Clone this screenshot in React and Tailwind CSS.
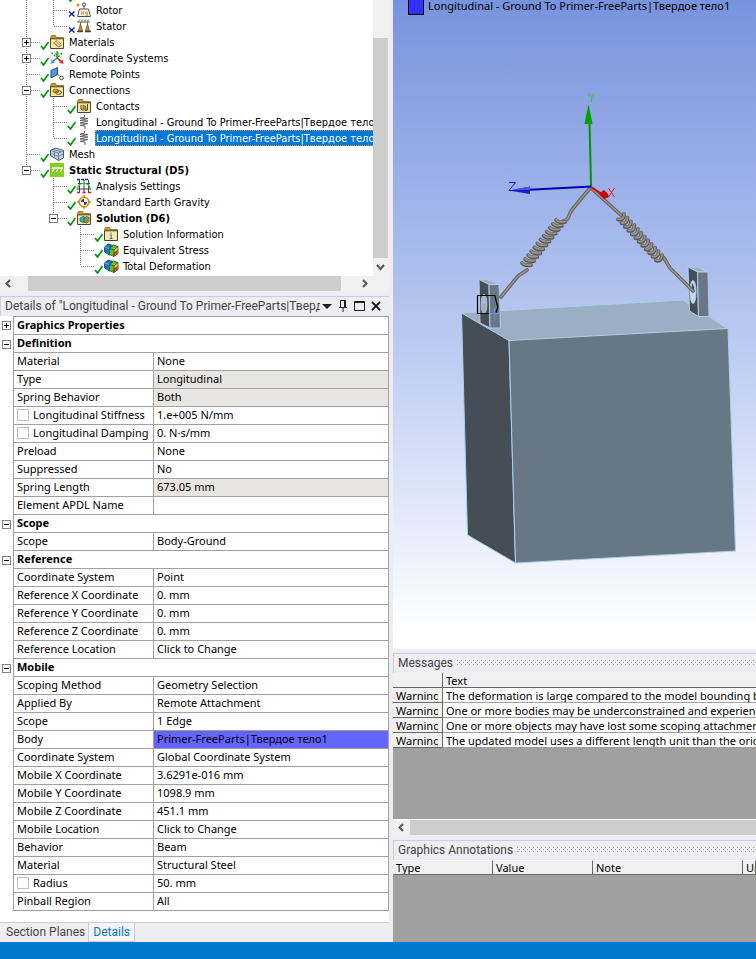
import { useState } from "react";
import clsx from "clsx";

const SPRING = "Longitudinal - Ground To Primer-FreeParts|Твердое тело";

// guides: one entry per indent level
const TREE = [
    { guides: ["pass", "pass"], label: "", icon: null, mark: "check" },
    { guides: ["pass", "tee"], label: "Rotor", icon: "mass", mark: "cross" },
    { guides: ["pass", "end"], label: "Stator", icon: "support", mark: "cross" },
    { guides: ["plus"], label: "Materials", icon: "materials", mark: "check" },
    { guides: ["plus"], label: "Coordinate Systems", icon: "axes", mark: "check" },
    { guides: ["tee"], label: "Remote Points", icon: "remote", mark: "check" },
    { guides: ["minus"], label: "Connections", icon: "connections", mark: "check" },
    { guides: ["pass", "tee"], label: "Contacts", icon: "contacts", mark: "check" },
    { guides: ["pass", "tee"], label: SPRING, icon: "spring", mark: "check" },
    { guides: ["pass", "end"], label: SPRING, icon: "spring", mark: "check", selected: true },
    { guides: ["tee"], label: "Mesh", icon: "mesh", mark: "check" },
    { guides: ["minusEnd"], label: "Static Structural (D5)", icon: "static", mark: "check", bold: true },
    { guides: ["none", "tee"], label: "Analysis Settings", icon: "settings", mark: "check" },
    { guides: ["none", "tee"], label: "Standard Earth Gravity", icon: "gravity", mark: "check" },
    { guides: ["none", "minusEnd"], label: "Solution (D6)", icon: "solution", mark: "check", bold: true },
    { guides: ["none", "none", "tee"], label: "Solution Information", icon: "info", mark: "check" },
    { guides: ["none", "none", "tee"], label: "Equivalent Stress", icon: "result", mark: "check" },
    { guides: ["none", "none", "end"], label: "Total Deformation", icon: "result", mark: "check" },
];

const DETAILS = [
    { title: "Graphics Properties", closed: true, rows: [] },
    {
        title: "Definition",
        rows: [
            { name: "Material", value: "None" },
            { name: "Type", value: "Longitudinal", readOnly: true },
            { name: "Spring Behavior", value: "Both", readOnly: true },
            { name: "Longitudinal Stiffness", value: "1.e+005 N/mm", check: true },
            { name: "Longitudinal Damping", value: "0. N·s/mm", check: true },
            { name: "Preload", value: "None" },
            { name: "Suppressed", value: "No" },
            { name: "Spring Length", value: "673.05 mm", readOnly: true },
            { name: "Element APDL Name", value: "" },
        ],
    },
    { title: "Scope", rows: [{ name: "Scope", value: "Body-Ground" }] },
    {
        title: "Reference",
        rows: [
            { name: "Coordinate System", value: "Point" },
            { name: "Reference X Coordinate", value: "0. mm" },
            { name: "Reference Y Coordinate", value: "0. mm" },
            { name: "Reference Z Coordinate", value: "0. mm" },
            { name: "Reference Location", value: "Click to Change" },
        ],
    },
    {
        title: "Mobile",
        rows: [
            { name: "Scoping Method", value: "Geometry Selection" },
            { name: "Applied By", value: "Remote Attachment" },
            { name: "Scope", value: "1 Edge" },
            { name: "Body", value: "Primer-FreeParts|Твердое тело1", active: true },
            { name: "Coordinate System", value: "Global Coordinate System" },
            { name: "Mobile X Coordinate", value: "3.6291e-016 mm" },
            { name: "Mobile Y Coordinate", value: "1098.9 mm" },
            { name: "Mobile Z Coordinate", value: "451.1 mm" },
            { name: "Mobile Location", value: "Click to Change" },
            { name: "Behavior", value: "Beam" },
            { name: "Material", value: "Structural Steel" },
            { name: "Radius", value: "50. mm", check: true },
            { name: "Pinball Region", value: "All" },
        ],
    },
];

const MESSAGES = [
    "The deformation is large compared to the model bounding box.",
    "One or more bodies may be underconstrained and experiencing rigid body motion.",
    "One or more objects may have lost some scoping attachments during the update.",
    "The updated model uses a different length unit than the original.",
];

const uiFont = "font-[Roboto,sans-serif] text-[12px]";
const gridFont = "font-['Noto_Sans',sans-serif] text-[11px]";

function Folder({ children }) {
    return (
        <>
            <path d="M1.5 3.5 2.5 1.5h4l1 2h7v2h-13z" fill="#c99a1e" stroke="#7a5c14" strokeWidth="0.7" />
            <path d="M1.5 4.8h13v9.7h-13z" fill="#f8eaa4" stroke="#4d4530" />
            {children}
        </>
    );
}

function TreeIcon({ name }) {
    return (
        <svg viewBox="0 0 16 16" className="h-4 w-4 shrink-0" aria-hidden="true">
            {name === "mass" && (
                <>
                    <circle cx="2" cy="3" r="1.6" fill="#dc9a12" />
                    <circle cx="8" cy="2.6" r="1.6" fill="none" stroke="#444" />
                    <path d="M8 4v3M3.5 7h9l2 7.5h-13z" fill="#f4f4f2" stroke="#555" />
                    <path d="M5.5 12.5v-3.5M5.5 11h2v1.5M7.5 9v2M9.5 10h2v3.5h-2M9.5 10v2h2" fill="none" stroke="#e0a01c" strokeWidth="0.9" />
                </>
            )}
            {name === "support" && (
                <>
                    <path d="M2 3.5 4 1.5M5 3.5 7 1.5M8 3.5l2-2M11 3.5l2-2M1 4h13" stroke="#444" strokeWidth="0.9" />
                    <path d="M4.5 4v2.5M11.5 4v2.5M4.5 6 6.5 13h-4zM11.5 6l2 7h-4z" fill="#c88d1c" stroke="#6d5320" strokeWidth="0.8" />
                    <path d="M1 13.5h6M9 13.5h6" stroke="#444" strokeWidth="1.5" />
                </>
            )}
            {name === "materials" && (
                <Folder>
                    <path d="M4.5 9 8 6.5l4 3.5v2l-2.5 1z" fill="#e8b76c" stroke="#8f6937" strokeWidth="0.7" />
                    <path d="m6 8 4 4M8 7l3.5 3.5" stroke="#fbe2b0" strokeWidth="0.8" />
                </Folder>
            )}
            {name === "axes" && (
                <>
                    <path d="M2.5 2.5 13 13M13 3 3 13" stroke="#555" strokeWidth="1.2" strokeDasharray="2 1.5" />
                    <path d="M8 8V4" stroke="#18c526" strokeWidth="2" />
                    <path d="m5.5 4.5 2.5-4 2.5 4z" fill="#18d82a" />
                    <path d="m8 8-4 3" stroke="#3a8ade" strokeWidth="1.5" />
                    <path d="m1.5 14 1-4.5L6 12.5z" fill="#4f9cf0" />
                    <path d="m8 8 4 3" stroke="#d82222" strokeWidth="1.5" />
                    <path d="m14.5 14-1-4.5-3.5 3z" fill="#ee2222" />
                </>
            )}
            {name === "remote" && (
                <>
                    <path d="M2 4.5 8.5 1.5v7L2 12z" fill="#5b93dc" stroke="#234f91" />
                    <path d="m7 7 5 4" stroke="#666" strokeDasharray="1.5 1" />
                    <circle cx="12.5" cy="12" r="1.8" fill="#fff" stroke="#444" />
                </>
            )}
            {name === "connections" && (
                <Folder>
                    <ellipse cx="6.8" cy="9" rx="3" ry="1.8" fill="#d8a53c" stroke="#75551e" strokeWidth="0.8" />
                    <ellipse cx="9.5" cy="10.5" rx="3" ry="1.8" fill="none" stroke="#75551e" />
                </Folder>
            )}
            {name === "contacts" && (
                <Folder>
                    <path d="M5 7v4l2.5 1.5M11.5 6v6l-2.5.5" fill="none" stroke="#444" />
                    <path d="m7 7 3 1.5v4L7 11z" fill="#d6921c" stroke="#60450f" strokeWidth="0.7" />
                </Folder>
            )}
            {name === "spring" && (
                <path
                    d="M8.5 1v2L4 4.2l8 .3-8 2 8 .5-8 2 8 .5-8 2 5 .5V15"
                    fill="none"
                    stroke="#555"
                    strokeWidth="0.9"
                />
            )}
            {name === "mesh" && (
                <>
                    <path d="m1.5 4.5 5-2.5 8 2.5V12l-5 2.5-8-5z" fill="#c4d2e4" stroke="#4b5d78" />
                    <path d="m1.5 4.5 8 2.5v7.5M9.5 7l5-2.5M4 3.3 12 5.8M5.5 5.7v6.3M1.5 7l8 3.5 5-3" fill="none" stroke="#5f718b" strokeWidth="0.8" />
                </>
            )}
            {name === "static" && (
                <>
                    <rect x="1" y="1" width="14" height="14" fill="#85cf1d" />
                    <path d="M3 6h11M5 6 3.5 10M9 6l-1.5 4M13 6l-1.5 4" stroke="#fff" strokeWidth="1.3" />
                </>
            )}
            {name === "settings" && (
                <>
                    <path d="M3.5 2v12M8 2v12M12.5 2v12M2 5.5h12M2 11h12" stroke="#444" />
                    <path d="M1 12C3 5 5 5.5 8 5.5S13 6 15 12" fill="none" stroke="#22c832" strokeWidth="1.2" />
                    <path d="M1 1.5h3M5 1.5h3M9 1.5h3" stroke="#2020e8" strokeWidth="1.5" />
                    <path d="M1 14.5h3M6.5 14.5h3M12 14.5h3" stroke="#e01818" strokeWidth="1.5" />
                </>
            )}
            {name === "gravity" && (
                <>
                    <circle cx="8" cy="8" r="4.8" fill="#eee" stroke="#c8921e" strokeWidth="1.6" />
                    <path d="M8 8V5a3 3 0 0 0-3 3zM8 8h3a3 3 0 0 1-3 3z" fill="#3a3a3a" />
                    <path d="m8 .5 1.5 2.5h-3zM8 15.5 6.5 13h3zM.5 8 3 6.5v3zM15.5 8 13 9.5v-3z" fill="#c8921e" />
                </>
            )}
            {name === "solution" && (
                <Folder>
                    <path d="m4 8 3-1.5 2.5 1v4l-3 1L4 11z" fill="#2cacd8" stroke="#25525e" strokeWidth="0.7" />
                    <path d="m8 8 2.5-1.5 2.5 1v4l-2.5 1.5L8 12z" fill="#42c23e" stroke="#335" strokeWidth="0.7" />
                    <path d="m10.5 9 2.5-1v3.5L10.5 13z" fill="#ec6024" />
                </Folder>
            )}
            {name === "info" && (
                <Folder>
                    <path d="M8 6.5v1.2M6.8 9h1.4v3.5M6.5 12.5h3" fill="none" stroke="#2e8aa8" strokeWidth="1.2" />
                </Folder>
            )}
            {name === "result" && (
                <>
                    <path d="m1.5 5 3.5-3 5 1.5v7L6.5 13l-5-3z" fill="#1d6ed2" stroke="#173a5c" strokeWidth="0.8" />
                    <path d="m1.5 5 5 1.5v6.5" fill="none" stroke="#26d0de" strokeWidth="1.2" />
                    <path d="M6.5 6.5 10.5 3l4.5 1.5v7L11 14.5l-4.5-2z" fill="#44cf38" stroke="#33401b" strokeWidth="0.8" />
                    <path d="m10.5 7.5 4-2.5v3l-4 2.5z" fill="#f5dc22" />
                    <path d="m10.5 10.5 4-2.5v3.5l-4 2.5z" fill="#ee3d18" />
                    <path d="M6.5 6.5 11 8v6.5M11 8l4-3.5" fill="none" stroke="#33401b" strokeWidth="0.8" />
                </>
            )}
        </svg>
    );
}

function Guide({ kind }) {
    const box = kind.startsWith("plus") || kind.startsWith("minus");
    const stops = kind === "end" || kind === "minusEnd";
    return (
        <svg viewBox="0 0 27 16" className="h-4 w-[27px] shrink-0" shapeRendering="crispEdges" aria-hidden="true">
            {kind !== "none" && (
                <path d={stops ? "M13.5 0V8" : "M13.5 0V16"} stroke="#808080" strokeDasharray="1 1" />
            )}
            {kind !== "none" && kind !== "pass" && (
                <path d="M14 8.5H27" stroke="#808080" strokeDasharray="1 1" />
            )}
            {box && (
                <>
                    <rect x="9.5" y="4.5" width="8" height="8" fill="#fff" stroke="#808080" />
                    <path d={kind === "plus" ? "M11 8.5h5M13.5 6v5" : "M11 8.5h5"} stroke="#000" />
                </>
            )}
        </svg>
    );
}

function Mark({ kind }) {
    return (
        <svg viewBox="0 0 9 16" className="h-4 w-[9px] shrink-0" aria-hidden="true">
            {kind === "check" ? (
                <path d="m1 12 2.5 3L8.5 8" fill="none" stroke="#0a9a12" strokeWidth="1.8" />
            ) : (
                <path d="m2 9.5 5.5 5M7.5 9.5l-5.5 5" stroke="#10208a" strokeWidth="1.5" />
            )}
        </svg>
    );
}

function Tree() {
    return (
        <div className="flex h-[292px] shrink-0 flex-col bg-[#f0f0f0]">
            <div className="flex min-h-0 flex-1">
                <div className="min-w-0 flex-1 overflow-hidden bg-white">
                    <ul className="-mt-3.5 pl-[13px] font-['DejaVu_Sans_Condensed','Noto_Sans',sans-serif] text-[11px] leading-[15px]">
                        {TREE.map((item, idx) => (
                            <li key={idx} className="flex h-4 whitespace-nowrap">
                                {item.guides.map((kind, level) => (
                                    <Guide key={level} kind={kind} />
                                ))}
                                <Mark kind={item.mark} />
                                <TreeIcon name={item.icon} />
                                <span
                                    className={clsx(
                                        "ml-[3px] px-px pt-px",
                                        item.bold && "font-bold",
                                        item.selected
                                            ? "bg-[#0078d7] text-white outline-1 -outline-offset-1 outline-dotted outline-[#e08a30]"
                                            : "text-black"
                                    )}
                                >
                                    {item.label}
                                </span>
                            </li>
                        ))}
                    </ul>
                </div>
                <div className="flex w-4 flex-col items-center pt-[38px] pr-px">
                    <div className="w-full flex-1 bg-[#cdcdcd]" />
                    <svg viewBox="0 0 15 18" className="h-[18px] w-[15px]">
                        <path d="m4 7 3.5 4L11 7" fill="none" stroke="#555" strokeWidth="2" />
                    </svg>
                </div>
            </div>
            <div className="mb-px flex h-[15px] items-center pr-[9px]">
                <svg viewBox="0 0 28 15" className="h-full w-7">
                    <path d="M10 4 6.5 7.5 10 11" fill="none" stroke="#555" strokeWidth="2" />
                </svg>
                <div className="h-full flex-1 bg-[#cdcdcd]" />
                <svg viewBox="0 0 39 15" className="h-full w-[39px]">
                    <path d="m22 4 3.5 3.5L22 11" fill="none" stroke="#555" strokeWidth="2" />
                </svg>
            </div>
        </div>
    );
}

function Expander({ label, closed, onClick }) {
    return (
        <button type="button" onClick={onClick} aria-label={`Toggle ${label}`} className="ml-0.5 block h-[9px] w-[9px]">
            <svg viewBox="0 0 9 9" className="h-full w-full" shapeRendering="crispEdges">
                <rect x="0.5" y="0.5" width="8" height="8" fill="#fff" stroke="#808080" />
                <path d={closed ? "M2 4.5h5M4.5 2v5" : "M2 4.5h5"} stroke="#000" />
            </svg>
        </button>
    );
}

function Details() {
    const [toggled, setToggled] = useState({});
    const line = "border-[#a0a0a0]";

    return (
        <section className="flex min-h-0 flex-1 flex-col bg-white">
            <header className={clsx(uiFont, "flex h-6 shrink-0 items-end bg-[#eeeef2] text-[#444]")}>
                <div className="flex h-5 w-full items-center border-t border-l border-[#ccccdf] pb-0.5 pl-1">
                    <h2 className="min-w-0 flex-1 overflow-hidden whitespace-nowrap">
                        Details of "{SPRING}"
                    </h2>
                    <div className="flex w-[69px] items-center justify-between pr-2 pl-0.5 text-[#1e1e1e]">
                        <button type="button" aria-label="Panel menu">
                            <svg viewBox="0 0 10 12" className="h-3 w-2.5"><path d="M0 4h10L5 9z" fill="currentColor" /></svg>
                        </button>
                        <button type="button" aria-label="Pin">
                            <svg viewBox="0 0 10 12" className="h-3 w-2.5" fill="none" stroke="currentColor">
                                <path d="M2.5 7V.5h5V7M1 7.5h8M5 8v4M6.5 1v6" />
                            </svg>
                        </button>
                        <button type="button" aria-label="Maximize">
                            <svg viewBox="0 0 11 12" className="h-3 w-[11px]" fill="none" stroke="currentColor">
                                <path d="M.5 1.5h10v9H.5zM.5 2.5h10" />
                            </svg>
                        </button>
                        <button type="button" aria-label="Close">
                            <svg viewBox="0 0 10 12" className="h-3 w-2.5"><path d="m1 2 8 8M9 2l-8 8" stroke="currentColor" strokeWidth="1.8" /></svg>
                        </button>
                    </div>
                </div>
            </header>
            <div className="min-h-0 flex-1 overflow-hidden">
                <table className={clsx(gridFont, "w-full table-fixed border-separate border-spacing-0 text-left leading-[15px] text-black")}>
                    <colgroup>
                        <col className="w-[13px]" />
                        <col className="w-[140px]" />
                        <col />
                    </colgroup>
                    {DETAILS.map((group, idx) => {
                        const closed = Boolean(group.closed) !== Boolean(toggled[group.title]);
                        return (
                            <tbody key={group.title}>
                                <tr>
                                    <td className="p-0 align-middle">
                                        <Expander
                                            label={group.title}
                                            closed={closed}
                                            onClick={() => setToggled({ ...toggled, [group.title]: !toggled[group.title] })}
                                        />
                                    </td>
                                    <th colSpan={2} className={clsx("border-x border-b pt-0 pb-0.5 pl-[3px] font-bold", line, idx === 0 && "border-t")}>
                                        {group.title}
                                    </th>
                                </tr>
                                {!closed &&
                                    group.rows.map((row) => (
                                        <tr key={row.name}>
                                            <td className="p-0" />
                                            <th className={clsx("overflow-hidden border-b border-l pt-0 pr-0 pb-0.5 pl-[3px] font-normal whitespace-nowrap", line)}>
                                                {row.check ? (
                                                    <label className="flex items-center gap-1">
                                                        <input type="checkbox" className="h-3 w-3 shrink-0 appearance-none border border-[#c0c0c0] bg-white checked:bg-[#0078d7]" />
                                                        {row.name}
                                                    </label>
                                                ) : (
                                                    row.name
                                                )}
                                            </th>
                                            <td
                                                className={clsx(
                                                    "h-[18px] border-x border-b pt-0 pb-0.5 pl-[3px] whitespace-nowrap",
                                                    line,
                                                    row.readOnly && "bg-[#e7e6e3]",
                                                    row.active && "bg-[#6464ff]"
                                                )}
                                            >
                                                {row.value}
                                            </td>
                                        </tr>
                                    ))}
                            </tbody>
                        );
                    })}
                </table>
            </div>
            <nav className={clsx(uiFont, "flex h-5 shrink-0 border-t border-[#ccccdf] bg-[#eeeef2] leading-4")}>
                <button type="button" className="pr-[3px] pb-px pl-1.5 text-[#444]">Section Planes</button>
                <button type="button" className="border-x border-b border-[#ccccdf] bg-[#f5f5f7] px-1 text-[#0078d0]">Details</button>
            </nav>
        </section>
    );
}

// centres of the coil turns between two points
function turns(x1, y1, x2, y2, count) {
    return Array.from({ length: count }, (_, i) => {
        const t = i / (count - 1);
        return [x1 + (x2 - x1) * t, y1 + (y2 - y1) * t];
    });
}

function Coil({ points, turn }) {
    return points.map(([x, y], idx) => (
        <g key={idx} transform={`translate(${x} ${y})`} fill="none" strokeLinecap="round">
            <path d={turn} stroke="#5d5954" strokeWidth="3.8" />
            <path d={turn} stroke="#98938c" strokeWidth="1.8" transform="translate(0 -0.5)" />
        </g>
    ));
}

function Rod({ d }) {
    return (
        <g fill="none" strokeLinecap="round">
            <path d={d} stroke="#66625d" strokeWidth="3.6" />
            <path d={d} stroke="#98948e" strokeWidth="1.6" />
        </g>
    );
}

function Viewport() {
    return (
        <div className="relative min-h-0 flex-1 overflow-hidden bg-linear-to-b from-[#7893de] via-[#bac9f1] via-52% to-white to-97%">
            <svg viewBox="393 0 363 649" className="h-full w-full" role="img" aria-label="Model view">
                <g stroke="#b0cdea" strokeLinejoin="round">
                    <path d="m461.5 313 221-13 6 3.5 39.5 25.5-219 12z" fill="#9aaec4" />
                    <path d="M461.5 313 509 340.5 515.5 563 467.5 535z" fill="#454d57" />
                    <path d="m509 340.5 219-12 7.5 222.5-220 12z" fill="#677785" />

                    <path d="m479 279.5 7-.5 13 5.5h-10z" fill="#9aaec4" />
                    <path d="m479 279.5 10 5 1 43.5-10-5z" fill="#454d57" />
                    <path d="M489 284.5h10l1.5 43.5H490z" fill="#677785" />
                    <ellipse cx="484" cy="304" rx="2.8" ry="9.5" fill="#9cadbd" />
                    <path d="M484 295v9M482 302h4" />

                    <path d="M688 267h10l10 5h-10.5z" fill="#9aaec4" />
                    <path d="m688 267 9.5 5 1 44.5-9-5.5z" fill="#454d57" />
                    <path d="M697.5 272H708l1 44.5h-10.5z" fill="#677785" />
                    <ellipse cx="693" cy="292" rx="3" ry="11.5" fill="#c7d8ee" />
                    <path d="M691 291c0-10 3-10 4 0z" fill="#454d57" />
                </g>

                <path d="M477.5 295.5h17.5l2 9 1 2-2 6M494 313.5h-16.5v-18" fill="none" stroke="#000" strokeWidth="1.2" />
                <path d="M489 313.5h11M494.5 308v11" stroke="#6f8fe8" />

                <Rod d="M590 188 575 206Q570 212 569 216T563 221" />
                <Coil points={turns(560, 223, 526, 266, 12)} turn="M-4-3Q-2 0 5-1" />
                <Rod d="M527 270 518 276 501 297" />

                <Rod d="M591 188 622 216" />
                <Coil points={turns(622, 217, 660, 258, 12)} turn="M-4 2.5Q2 4 2-3" />
                <Rod d="M664 258 670 268 693 291" />

                <path d="M591 186 589.5 122" stroke="#009400" strokeWidth="2" />
                <path d="m588.5 104 4 20h-8z" fill="#00a000" />
                <path d="M591 186.5 525 190" stroke="#0000b4" strokeWidth="2" />
                <path d="m509 190.5 21-4v7.5z" fill="#1c1cc4" />
                <path d="m513 190 17-3.5v3.5z" fill="#5050e4" />
                <path d="m591 187 11 7" stroke="#e00000" strokeWidth="2" />
                <path d="m599 194 5-4 4 4 1 3-5 2z" fill="#c80000" />

                <g fill="none" strokeWidth="1">
                    <path d="m588.5 93.5 3 4 3-4M591.5 97.5v5" stroke="#00ee00" />
                    <path d="M509 182.5h6.5l-6.5 8h7" stroke="#1414dc" />
                    <path d="m608.5 188 6 9M614.5 188l-6 9" stroke="#f01818" />
                </g>
            </svg>
            <div className={clsx(gridFont, "absolute top-0 left-[15px] flex items-start gap-1 leading-3 whitespace-nowrap text-black")}>
                <span className="h-[15px] w-4 border border-t-0 border-black bg-[#3232ff]" />
                <span>{SPRING}1</span>
            </div>
        </div>
    );
}

function PanelTitle({ children }) {
    const id = `grip-${children.replace(" ", "-")}`;
    return (
        <header className={clsx(uiFont, "flex h-5 shrink-0 items-center gap-1 border-t border-l border-[#ccccdf] bg-[#eeeef2] pb-0.5 pl-1 text-[#444]")}>
            <h2>{children}</h2>
            <svg className="h-[5px] min-w-0 flex-1" shapeRendering="crispEdges" aria-hidden="true">
                <pattern id={id} width="4" height="4" patternUnits="userSpaceOnUse">
                    <rect width="1" height="1" fill="#999" />
                    <rect x="2" y="2" width="1" height="1" fill="#999" />
                </pattern>
                <rect width="100%" height="5" fill={`url(#${id})`} />
            </svg>
        </header>
    );
}

function Messages() {
    return (
        <section className="mt-1 flex shrink-0 flex-col">
            <PanelTitle>Messages</PanelTitle>
            <div className="h-[146px] overflow-hidden bg-[#a0a0a0]">
                <table className={clsx(gridFont, "w-full table-fixed border-separate border-spacing-0 text-left leading-4 text-black")}>
                    <colgroup>
                        <col className="w-[50px]" />
                        <col />
                    </colgroup>
                    <thead className="bg-[#f0f0f0]">
                        <tr>
                            <th aria-label="Severity" className="border-r border-b border-[#696969] p-0" />
                            <th className="border-b border-[#696969] py-0 pl-[3px] font-normal">
                                <div className="h-[14px]">Text</div>
                            </th>
                        </tr>
                    </thead>
                    <tbody>
                        {MESSAGES.map((text) => (
                            <tr key={text}>
                                <td className="overflow-hidden border-r border-b border-[#696969] bg-[#f0f0f0] py-0 pr-1 pl-[3px]">
                                    <div className="h-[14px] overflow-hidden">Warning</div>
                                </td>
                                <td className="overflow-hidden border-b border-[#a0a0a0] bg-white py-0 pl-[3px] whitespace-nowrap">
                                    <div className="h-[14px] overflow-hidden">{text}</div>
                                </td>
                            </tr>
                        ))}
                    </tbody>
                </table>
            </div>
            <div className="flex h-4 items-center border-t border-white bg-[#f0f0f0]">
                <svg viewBox="0 0 17 15" className="h-full w-[17px]">
                    <path d="M10 4 6.5 7.5 10 11" fill="none" stroke="#555" strokeWidth="2" />
                </svg>
                <div className="h-full flex-1 bg-[#cdcdcd]" />
            </div>
        </section>
    );
}

function Annotations() {
    const cell = "overflow-hidden border-r border-b border-t border-r-[#696969] border-b-[#696969] border-t-white py-0 pr-0 pl-[3px] font-normal";
    return (
        <section className="mt-[5px] flex shrink-0 flex-col">
            <PanelTitle>Graphics Annotations</PanelTitle>
            <div className="h-[82px] overflow-hidden bg-[#a0a0a0]">
                <table className={clsx(gridFont, "w-full table-fixed border-separate border-spacing-0 bg-[#f0f0f0] text-left leading-[13px] text-black")}>
                    <colgroup>
                        <col className="w-[100px]" />
                        <col className="w-[100px]" />
                        <col className="w-[150px]" />
                        <col />
                    </colgroup>
                    <thead>
                        <tr>
                            <th className={cell}>Type</th>
                            <th className={cell}>Value</th>
                            <th className={cell}>Note</th>
                            <th className={cell}>Unit</th>
                        </tr>
                    </thead>
                </table>
            </div>
        </section>
    );
}

export default function App() {
    return (
        <div className="flex h-screen flex-col overflow-hidden bg-[#eeeef2]">
            <main className="flex min-h-0 flex-1 gap-1">
                <aside className="flex w-[389px] shrink-0 flex-col">
                    <Tree />
                    <Details />
                </aside>
                <div className="flex min-w-0 flex-1 flex-col">
                    <Viewport />
                    <Messages />
                    <Annotations />
                </div>
            </main>
            <footer className="h-[17px] shrink-0 bg-[#007acc]" />
        </div>
    );
}
